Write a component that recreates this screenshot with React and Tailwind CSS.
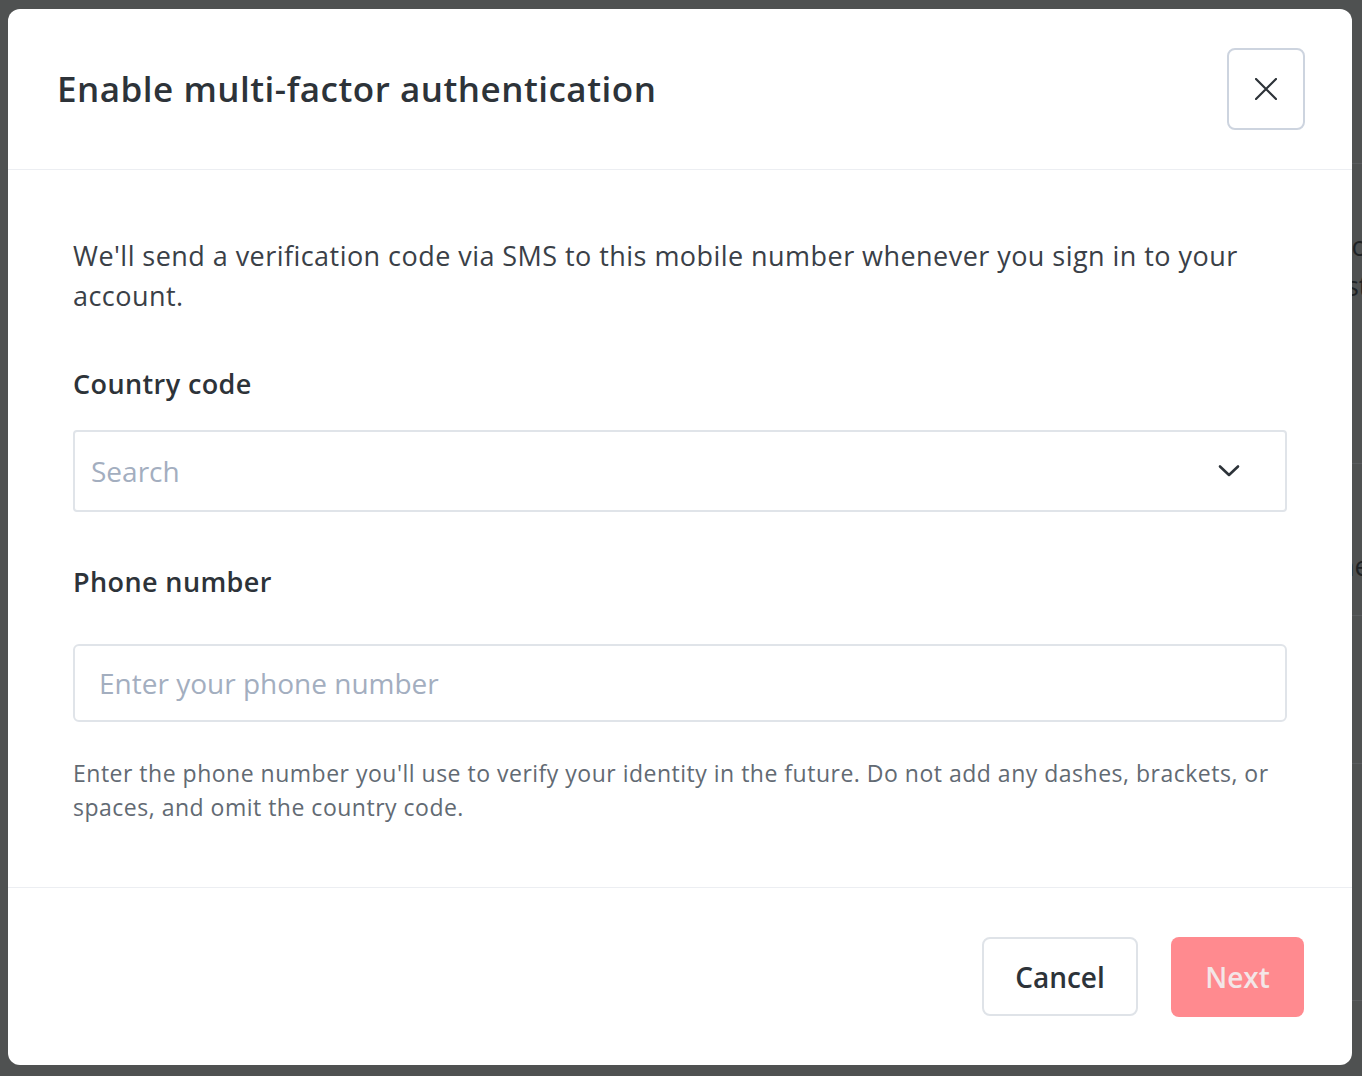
import React from "react";

function XIcon() {
  return (
    <svg width="22" height="22" viewBox="0 0 22 22" fill="none">
      <path d="M1 1L21 21M21 1L1 21" stroke="#2d3339" strokeWidth="2.2" strokeLinecap="round" />
    </svg>
  );
}

function Chevron() {
  return (
    <svg width="22" height="14" viewBox="0 0 22 14" fill="none">
      <path d="M2 2.5L11 11L20 2.5" stroke="#2d3339" strokeWidth="2.6" strokeLinecap="round" strokeLinejoin="round" />
    </svg>
  );
}

export default function App() {
  return (
    <div className="relative h-[1076px] w-full overflow-hidden bg-[#4f5151] font-['Open_Sans','Noto_Sans',sans-serif]">
      {/* content of the page lying under the overlay */}
      <div className="absolute inset-0 overflow-hidden">
        <div className="absolute left-[1338px] top-[226px] text-[27px] leading-[40px] text-[#1f2224]">you</div>
        <div className="absolute left-[1346px] top-[266px] text-[27px] leading-[40px] text-[#1f2224]">st</div>
        <div className="absolute left-[1338px] top-[546px] text-[27px] leading-[40px] text-[#1f2224]">ne</div>
        <div className="absolute left-[1352px] top-[163px] h-px w-[20px] bg-[#5a5c5e]" />
        <div className="absolute left-[1352px] top-[463px] h-px w-[20px] bg-[#5a5c5e]" />
        <div className="absolute left-[1352px] top-[615px] h-px w-[20px] bg-[#5a5c5e]" />
        <div className="absolute left-[1352px] top-[763px] h-px w-[20px] bg-[#5a5c5e]" />
        <div className="absolute left-[1352px] top-[1000px] h-px w-[20px] bg-[#5a5c5e]" />
      </div>

      <div className="relative z-10 pl-[8px] pt-[9px]">
        <div className="flex w-[1344px] flex-col rounded-[12px] bg-white">
          <div className="flex h-[161px] items-center justify-between border-b border-[#eceef2] pl-[49px] pr-[47px]">
            <h2 className="text-[35px] font-semibold leading-[44px] tracking-[0.5px] text-[#2d3339]">
              Enable multi-factor authentication
            </h2>
            <button className="flex h-[82px] w-[78px] items-center justify-center rounded-[8px] border-2 border-[#cdd4df] bg-white">
              <XIcon />
            </button>
          </div>

          <div className="flex flex-col px-[65px] pb-[63px] pt-[66px]">
            <p className="text-[27px] leading-[40px] tracking-[0.45px] text-[#3a4047]">
              We'll send a verification code via SMS to this mobile number whenever you sign in to your account.
            </p>
            <label className="mt-[50px] text-[27px] font-semibold leading-[36px] tracking-[0.4px] text-[#2d3339]">Country code</label>
            <div className="mt-[28px] flex h-[82px] items-center justify-between rounded-[4px] border-2 border-[#e0e4e9] pl-[16px] pr-[45px]">
              <span className="text-[28px] text-[#a3aebf]">Search</span>
              <Chevron />
            </div>
            <label className="mt-[52px] text-[27px] font-semibold leading-[36px] tracking-[0.4px] text-[#2d3339]">Phone number</label>
            <div className="mt-[44px] flex h-[78px] items-center rounded-[6px] border-2 border-[#e0e4e9] pl-[24px]">
              <span className="text-[28px] text-[#a3aebf]">Enter your phone number</span>
            </div>
            <p className="mt-[34px] text-[23px] leading-[34px] tracking-[0.5px] text-[#626a73]">
              Enter the phone number you'll use to verify your identity in the future. Do not add any dashes, brackets, or spaces, and omit the country code.
            </p>
          </div>

          <div className="flex h-[178px] items-center justify-end gap-[33px] border-t border-[#eceef2] pr-[48px]">
            <button className="flex h-[79px] w-[156px] items-center justify-center rounded-[8px] border-2 border-[#dfe3e8] bg-white text-[28px] font-semibold text-[#2d3339]">
              Cancel
            </button>
            <button className="flex h-[80px] w-[133px] items-center justify-center rounded-[8px] bg-[#ff8a8f] text-[28px] font-semibold text-[#f3e6e7]">
              Next
            </button>
          </div>
        </div>
      </div>
    </div>
  );
}
